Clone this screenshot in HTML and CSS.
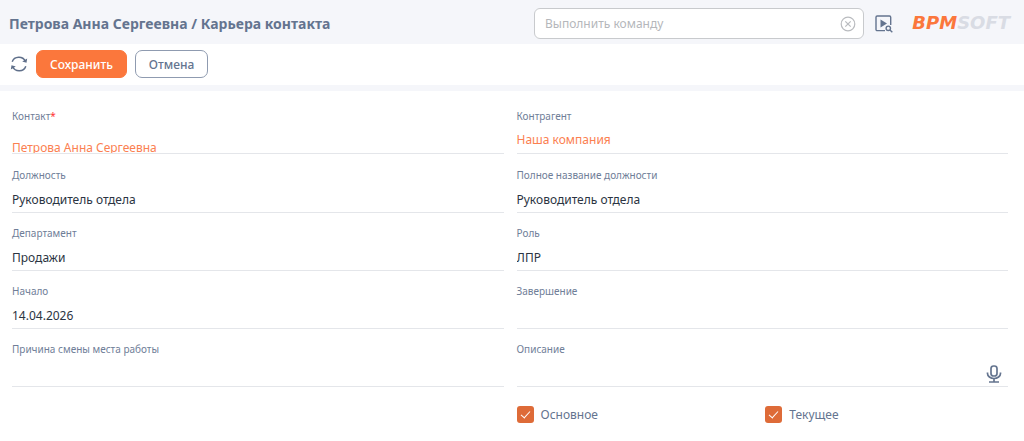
FILE: index.html
```html
<!DOCTYPE html>
<html lang="ru">
<head>
  <meta charset="UTF-8">
  <title>Карьера контакта</title>
  <link rel="stylesheet" href="styles.css">
</head>
<body>

  <header class="header">
    <h1 class="title">Петрова Анна Сергеевна / Карьера контакта</h1>
    <div class="command">
      <input type="text" class="command-input" placeholder="Выполнить команду" aria-label="Выполнить команду">
      <button type="button" class="icon-button" aria-label="Очистить">
        <svg width="16" height="16" viewBox="0 0 16 16" fill="none" stroke="#b9bbbf" stroke-width="1.2">
          <circle cx="8" cy="8" r="6.800"/>
          <path d="M5.300 5.300l5.400 5.400M10.700 5.300l-5.400 5.400"/>
        </svg>
      </button>
    </div>
    <button type="button" class="icon-button" aria-label="Запустить процесс">
      <svg width="18" height="18" viewBox="0 0 18 18" fill="none" stroke="#64748f" stroke-width="1.4">
        <path d="M10 15.600H2.200A1.200 1.200 0 0 1 1 14.400V2.200A1.200 1.200 0 0 1 2.200 1H14.500A1.200 1.200 0 0 1 15.700 2.200V10"/>
        <path d="M5.500 4.500v8l6.500-4z" fill="#64748f" stroke="none"/>
        <circle cx="13.300" cy="13.300" r="2.200"/>
        <path d="M15 15l2.300 2.300"/>
      </svg>
    </button>
    <div class="logo"><span class="logo-accent">BPM</span>SOFT</div>
  </header>

  <div class="toolbar">
    <button type="button" class="icon-button" aria-label="Обновить">
      <svg width="18" height="18" viewBox="0 0 18 18" fill="none" stroke="#5f6f8a" stroke-width="1.500">
        <path d="M2.200 6.800A7 6.600 0 0 1 15.300 6.300"/>
        <path d="M15.800 11.200A7 6.600 0 0 1 2.700 11.700"/>
        <path d="M17.200 3.500l-.7 4.300-4.300-1.200zM.8 14.500l.7-4.300 4.300 1.200z" fill="#5f6f8a" stroke="none"/>
      </svg>
    </button>
    <button type="submit" form="careerForm" class="btn btn-primary">Сохранить</button>
    <button type="button" class="btn">Отмена</button>
  </div>

  <form class="form" id="careerForm">
    <div class="field field-link">
      <span class="label">Контакт<span class="required">*</span></span>
      <a href="#" class="value link link-low">Петрова Анна Сергеевна</a>
    </div>
    <div class="field field-link">
      <span class="label">Контрагент</span>
      <a href="#" class="value link">Наша компания</a>
    </div>
    <div class="field">
      <label class="label" for="job">Должность</label>
      <input type="text" class="value" id="job" value="Руководитель отдела">
    </div>
    <div class="field">
      <label class="label" for="jobTitle">Полное название должности</label>
      <input type="text" class="value" id="jobTitle" value="Руководитель отдела">
    </div>
    <div class="field">
      <label class="label" for="department">Департамент</label>
      <input type="text" class="value" id="department" value="Продажи">
    </div>
    <div class="field">
      <label class="label" for="role">Роль</label>
      <input type="text" class="value" id="role" value="ЛПР">
    </div>
    <div class="field">
      <label class="label" for="startDate">Начало</label>
      <input type="text" class="value" id="startDate" value="14.04.2026">
    </div>
    <div class="field">
      <label class="label" for="dueDate">Завершение</label>
      <input type="text" class="value" id="dueDate">
    </div>
    <div class="field">
      <label class="label" for="reason">Причина смены места работы</label>
      <input type="text" class="value" id="reason">
    </div>
    <div class="field">
      <label class="label" for="description">Описание</label>
      <div class="value value-voice">
        <input type="text" class="voice-input" id="description">
        <button type="button" class="icon-button" aria-label="Голосовой ввод">
          <svg width="16" height="18" viewBox="0 0 16 18" fill="none" stroke="#64748f" stroke-width="1.700">
            <rect x="5" y="1" width="6" height="10" rx="2.600"/>
            <path d="M1.500 7.500v1a6.500 5 0 0 0 13 0v-1M8 13.500v3M3 17h10"/>
          </svg>
        </button>
      </div>
    </div>
    <div class="checks">
      <label class="check"><input type="checkbox" class="check-box" checked>Основное</label>
      <label class="check"><input type="checkbox" class="check-box" checked>Текущее</label>
    </div>
  </form>

</body>
</html>
```
FILE: styles.css
```css
* {
  box-sizing: border-box;
}

body {
  margin: 0;
  background: #f5f6fa;
  color: #64748f;
  font-family: "Noto Sans", sans-serif;
  font-size: 12px;
}

input,
button {
  font-family: inherit;
  font-size: inherit;
}

.header {
  display: flex;
  align-items: center;
  height: 44px;
  padding: 3px 14px 0 9px;
  gap: 11px;
}

.title {
  flex: 1;
  margin: 0;
  font-size: 14px;
  font-weight: 700;
  white-space: nowrap;
}

.command {
  display: flex;
  align-items: center;
  width: 33%;
  height: 31px;
  padding: 0 7px 0 10px;
  background: white;
  border: 1px solid #c8cacd;
  border-radius: 6px;
}

.command-input {
  flex: 1;
  min-width: 0;
  padding: 0;
  border: none;
  outline: none;
}

.command-input::placeholder {
  color: #b5b7bb;
}

.icon-button {
  display: flex;
  padding: 0;
  background: none;
  border: none;
  cursor: pointer;
}

.logo {
  margin-left: 8px;
  color: #d9dce4;
  font-family: "DejaVu Sans", sans-serif;
  font-size: 18px;
  font-weight: bold;
  font-style: italic;
  line-height: 20px;
  padding-bottom: 2px;
}

.logo-accent {
  color: #fb773c;
}

.toolbar {
  display: flex;
  align-items: center;
  gap: 8px;
  padding: 6px 10px 7px;
  background: white;
}

.btn {
  height: 28px;
  padding: 0 13px;
  background: white;
  color: #64748f;
  font-weight: 500;
  border: 1px solid #8f9bb0;
  border-radius: 7px;
  cursor: pointer;
}

.btn-primary {
  background: #fb773c;
  color: white;
  border-color: #fb773c;
}

.form {
  display: grid;
  grid-template-columns: 1fr 1fr;
  gap: 12px 13px;
  min-height: calc(100vh - 91px);
  margin-top: 6px;
  padding: 17px 16px 12px 12px;
  background: white;
  align-content: start;
}

.field {
  display: flex;
  flex-direction: column;
  gap: 4px;
}

.field-link {
  margin-bottom: 1px;
}

.label {
  color: #6f7e98;
  font-size: 10px;
  line-height: 16px;
}

.required {
  color: #f33;
}

.value {
  width: 100%;
  height: 26px;
  padding: 0;
  background: none;
  color: #2b3442;
  border: none;
  border-bottom: 1px solid #e4e6ea;
  outline: none;
}

.link {
  overflow: hidden;
  color: #fb8051;
  line-height: 24px;
  text-decoration: none;
}

.link-low {
  padding-top: 8px;
}

.value-voice {
  display: flex;
  align-items: center;
  padding-right: 6px;
}

.voice-input {
  flex: 1;
  padding: 0;
  border: none;
  outline: none;
}

.checks {
  display: grid;
  grid-template-columns: 1fr 1fr;
  grid-column: 2;
  gap: 6px;
  padding-top: 7px;
}

.check {
  display: flex;
  align-items: center;
  gap: 7px;
}

.check-box {
  appearance: none;
  width: 17px;
  height: 17px;
  margin: 0;
  display: grid;
  place-items: center;
  background: #de6b38;
  border-radius: 3px;
}

.check-box:checked::before {
  content: "";
  width: 4px;
  height: 8px;
  margin-bottom: 2px;
  border: solid white;
  border-width: 0 1px 1px 0;
  transform: rotate(42deg);
}
```
